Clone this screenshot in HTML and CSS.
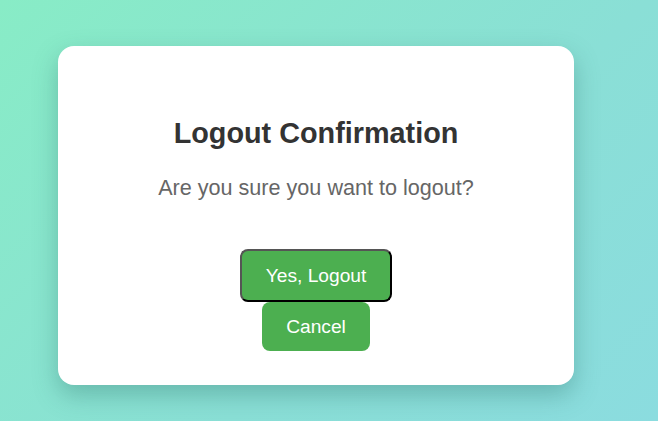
FILE: index.html
```html
<!DOCTYPE html>
<html lang="en">
<head>
<meta charset="utf-8">
<title>Logout Confirmation</title>
<link rel="stylesheet" href="styles.css">
</head>
<body>
  <main class="page">
    <section class="card">
      <h1 class="card-title">Logout Confirmation</h1>
      <p class="card-text">Are you sure you want to logout?</p>
      <div class="actions">
        <button class="btn btn-primary" type="button">Yes, Logout</button>
        <button class="btn btn-secondary" type="button">Cancel</button>
      </div>
    </section>
  </main>
</body>
</html>
```
FILE: styles.css
```css
html, body {
  margin: 0;
  padding: 0;
  height: 100%;
}

body {
  font-family: "Liberation Sans", Arial, sans-serif;
  background: linear-gradient(135deg, #88ecc6 0%, #8adfd6 60%, #8bdcdf 100%);
}

.page {
  height: 100%;
  display: flex;
  align-items: center;
  padding-left: 58px;
  padding-top: 10px;
  box-sizing: border-box;
}

.card {
  width: 516px;
  height: 339px;
  box-sizing: border-box;
  background: #fff;
  border-radius: 16px;
  box-shadow: 0 10px 24px rgba(40, 110, 100, 0.35);
  padding: 71px 40px 0;
  text-align: center;
}

.card-title {
  margin: 0;
  font-size: 28.8px;
  font-weight: bold;
  color: #333;
  line-height: 33px;
}

.card-text {
  margin: 25px 0 0;
  font-size: 21.6px;
  color: #666;
  line-height: 25px;
}

.actions {
  margin-top: 49px;
  display: flex;
  flex-direction: column;
  align-items: center;
}

.btn {
  font-family: "Liberation Sans", Arial, sans-serif;
  font-size: 19.2px;
  line-height: 23px;
  color: #fff;
  background: #4caf50;
  border-radius: 8px;
  cursor: pointer;
  margin: 0;
}

.btn-primary {
  padding: 13px 23.5px;
  border: 2px solid;
  border-color: #555 #000 #000 #555;
}

.btn-secondary {
  padding: 13px 24px;
  border: none;
}
```
